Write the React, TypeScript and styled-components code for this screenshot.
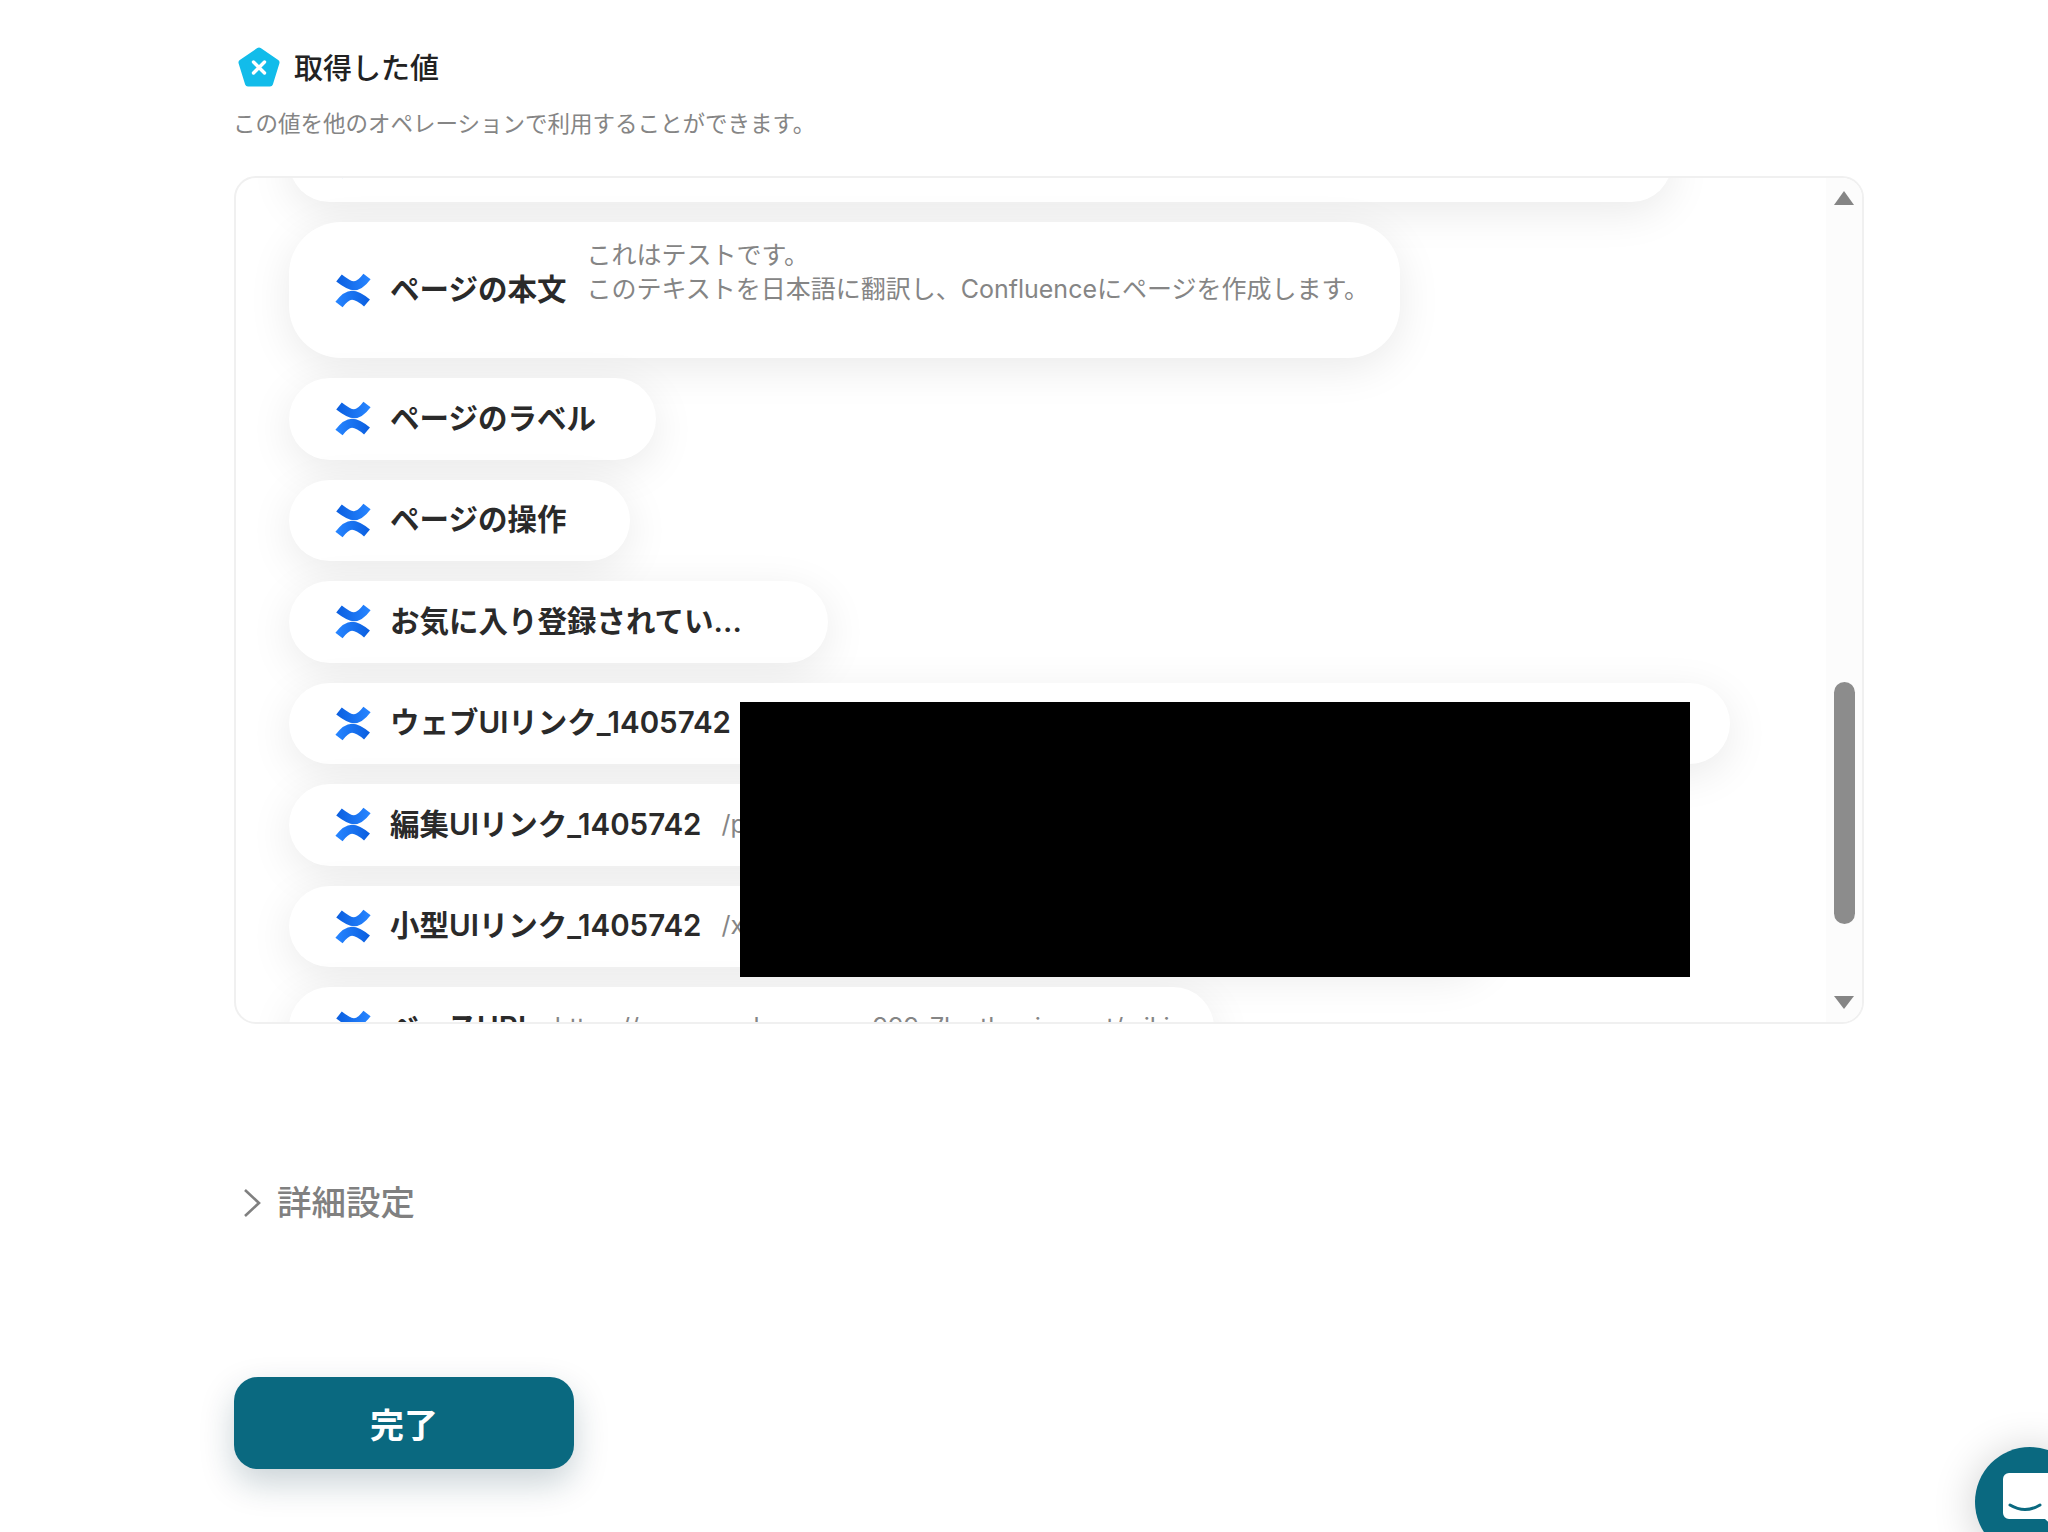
import React from "react";
import styled, { createGlobalStyle } from "styled-components";

const GlobalStyle = createGlobalStyle`
  html, body {
    margin: 0;
    padding: 0;
    background: #fff;
  }
  * {
    box-sizing: border-box;
  }
  body {
    font-family: Inter, "Noto Sans CJK JP", sans-serif;
  }
`;

const Page = styled.div`
  width: 2048px;
  height: 1532px;
  overflow: hidden;
  padding: 46px 0 0 234px;
  position: relative;
  background: #fff;
`;

const TitleRow = styled.div`
  display: flex;
  align-items: center;
  gap: 14px;
  height: 42px;
  padding-left: 4px;
`;

const Title = styled.h2`
  margin: 0;
  padding-bottom: 2px;
  font-size: 29px;
  font-weight: 500;
  line-height: 40px;
  color: #222;
  font-family: "Noto Sans CJK JP", sans-serif;
`;

const Description = styled.p`
  margin: 18px 0 0 -1px;
  font-size: 22.5px;
  line-height: 32px;
  color: #858585;
  font-family: "Noto Sans CJK JP", sans-serif;
`;

const Panel = styled.section`
  position: relative;
  display: flex;
  width: 1630px;
  height: 848px;
  margin-top: 38px;
  border: 2px solid #f0f0f0;
  border-radius: 22px;
  overflow: hidden;
  background: #fff;
`;

const Viewport = styled.div`
  flex: 1;
  min-width: 0;
  overflow: hidden;
`;

const List = styled.ul`
  list-style: none;
  display: flex;
  flex-direction: column;
  gap: 20px;
  margin: -57.5px 0 0;
  padding: 0 0 0 53px;
`;

const Pill = styled.li<{ $width?: number; $tall?: boolean }>`
  display: flex;
  align-items: center;
  flex: none;
  width: ${(p) => (p.$width ? `${p.$width}px` : "fit-content")};
  height: ${(p) => (p.$tall ? "136px" : "81.5px")};
  padding: 0 0 0 46px;
  border-radius: ${(p) => (p.$tall ? "52px" : "41px")};
  background: #fff;
  box-shadow: 0 10px 44px rgba(0, 0, 0, 0.085);
  white-space: nowrap;
`;

const Label = styled.span`
  margin-left: 19px;
  padding-bottom: 6px;
  font-size: 29.5px;
  font-weight: 600;
  color: #2a2a2a;
  font-family: Inter, "Noto Sans CJK JP", sans-serif;
`;

const Value = styled.span`
  margin-left: 20px;
  padding-bottom: 2px;
  font-size: 25px;
  line-height: 34px;
  color: #858585;
  white-space: pre-line;
  font-family: Inter, "Noto Sans CJK JP", sans-serif;
`;

const Scrollbar = styled.div`
  flex: none;
  display: flex;
  flex-direction: column;
  align-items: center;
  width: 36px;
  background: #fcfcfc;
`;

const ArrowUp = styled.div`
  flex: none;
  margin-top: 13px;
  width: 0;
  height: 0;
  border-left: 10px solid transparent;
  border-right: 10px solid transparent;
  border-bottom: 14px solid #858585;
`;

const Thumb = styled.div`
  flex: none;
  margin-top: 477px;
  width: 21px;
  height: 242px;
  border-radius: 11px;
  background: #8c8c8c;
`;

const ArrowDown = styled.div`
  flex: none;
  margin-top: auto;
  margin-bottom: 13px;
  width: 0;
  height: 0;
  border-left: 10px solid transparent;
  border-right: 10px solid transparent;
  border-top: 13px solid #858585;
`;

const Redaction = styled.div`
  position: absolute;
  left: 504px;
  top: 524px;
  width: 950px;
  height: 275px;
  background: #000;
`;

const DetailRow = styled.div`
  display: flex;
  align-items: center;
  gap: 16px;
  margin-top: 153px;
  padding-left: 9px;
  height: 48px;
`;

const DetailText = styled.span`
  padding-bottom: 2px;
  font-size: 34.5px;
  font-weight: 500;
  color: #808080;
  font-family: "Noto Sans CJK JP", sans-serif;
`;

const ChevronSvg = styled.svg`
  flex: none;
  margin-top: 4px;
`;

const DoneButton = styled.button`
  display: block;
  width: 340px;
  height: 92px;
  margin-top: 152px;
  border: 0;
  border-radius: 24px;
  background: #0a6980;
  color: #fff;
  font-size: 34px;
  font-weight: 600;
  font-family: "Noto Sans CJK JP", sans-serif;
  box-shadow: 0 14px 34px rgba(10, 50, 70, 0.22);
`;

const ChatButton = styled.div`
  position: absolute;
  left: 1975px;
  top: 1447px;
  width: 110px;
  height: 110px;
  display: flex;
  align-items: center;
  justify-content: center;
  border-radius: 50%;
  background: #0a6980;
  box-shadow: 0 4px 44px rgba(0, 0, 0, 0.2);
`;

const ConfluenceIcon = () => (
  <svg width="36" height="35" viewBox="0 0 36 35" fill="none" style={{ flex: "none" }}>
    <defs>
      <linearGradient id="cfTop" x1="2" y1="8" x2="34" y2="8" gradientUnits="userSpaceOnUse">
        <stop offset="0" stopColor="#0b5fe0" />
        <stop offset="1" stopColor="#2684ff" />
      </linearGradient>
      <linearGradient id="cfBottom" x1="2" y1="26" x2="34" y2="26" gradientUnits="userSpaceOnUse">
        <stop offset="0" stopColor="#2684ff" />
        <stop offset="1" stopColor="#0b5fe0" />
      </linearGradient>
    </defs>
    <path d="M4 5 Q14 12.8 19 12.8 Q25 12.8 32 3.5" stroke="url(#cfTop)" strokeWidth="9" />
    <path d="M4 31.5 Q11 22.2 17 22.2 Q23 22.2 32 30" stroke="url(#cfBottom)" strokeWidth="9" />
  </svg>
);

const ValueIcon = () => (
  <svg width="42" height="40" viewBox="0 0 42 40" fill="none">
    <path d="M21 3.5 L38.5 15.5 L32 36.5 L10 36.5 L3.5 15.5 Z" fill="#12bcea" stroke="#12bcea" strokeWidth="6" strokeLinejoin="round" />
    <path d="M15.5 15 L26.5 26 M26.5 15 L15.5 26" stroke="#fff" strokeWidth="3.4" strokeLinecap="round" />
  </svg>
);

const Chevron = () => (
  <ChevronSvg width="18" height="30" viewBox="0 0 18 30" fill="none">
    <path d="M2 2 L16 15 L2 28" stroke="#808080" strokeWidth="2.6" />
  </ChevronSvg>
);

const ChatIcon = () => (
  <svg width="54" height="58" viewBox="0 0 54 58" fill="none">
    <path d="M6 0 H48 A6 6 0 0 1 54 6 V57 L42 46 H6 A6 6 0 0 1 0 40 V6 A6 6 0 0 1 6 0 Z" fill="#fff" />
    <path d="M7 32 Q22 41 37 32" stroke="#0a6980" strokeWidth="3" strokeLinecap="round" />
  </svg>
);

const rows: { label: string; value?: string; width?: number; tall?: boolean }[] = [
  { label: "", width: 1383 },
  { label: "ページの本文", value: "これはテストです。\nこのテキストを日本語に翻訳し、Confluenceにページを作成します。\n\u00A0", width: 1111, tall: true },
  { label: "ページのラベル", width: 367 },
  { label: "ページの操作", width: 341 },
  { label: "お気に入り登録されてい...", width: 539 },
  { label: "ウェブUIリンク_1405742", width: 1441 },
  { label: "編集UIリンク_1405742", value: "/p", width: 1200 },
  { label: "小型UIリンク_1405742", value: "/x", width: 1200 },
  { label: "ベースURL", value: "https://savenwork-mm-aa-999-7h.atlassian.net/wiki", width: 925 },
];

export default function App() {
  return (
    <>
      <GlobalStyle />
      <Page>
        <TitleRow>
          <ValueIcon />
          <Title>取得した値</Title>
        </TitleRow>
        <Description>この値を他のオペレーションで利用することができます。</Description>
        <Panel>
          <Viewport>
            <List>
              {rows.map((row, i) => (
                <Pill key={i} $width={row.width} $tall={row.tall}>
                  <ConfluenceIcon />
                  <Label>{row.label}</Label>
                  {row.value && <Value>{row.value}</Value>}
                </Pill>
              ))}
            </List>
          </Viewport>
          <Scrollbar>
            <ArrowUp />
            <Thumb />
            <ArrowDown />
          </Scrollbar>
          <Redaction />
        </Panel>
        <DetailRow>
          <Chevron />
          <DetailText>詳細設定</DetailText>
        </DetailRow>
        <DoneButton>完了</DoneButton>
        <ChatButton>
          <ChatIcon />
        </ChatButton>
      </Page>
    </>
  );
}
